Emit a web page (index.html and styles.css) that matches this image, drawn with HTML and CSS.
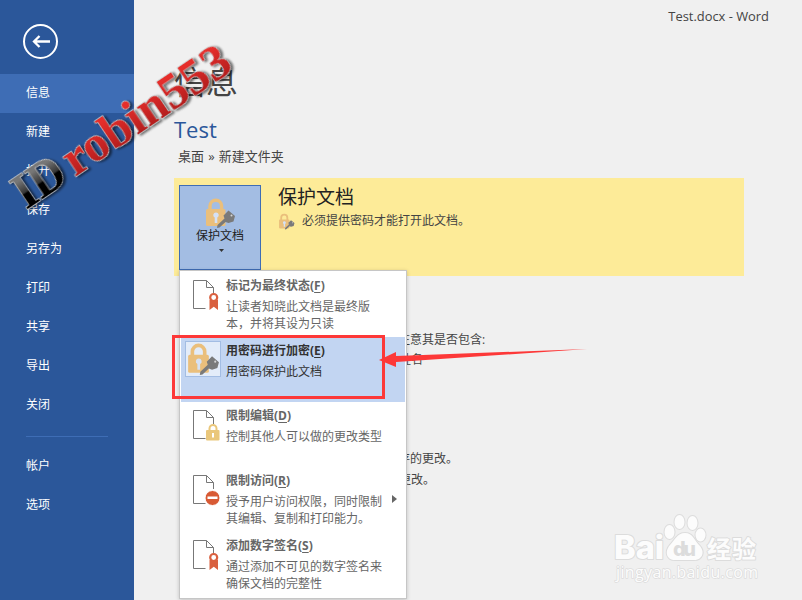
FILE: index.html
```html
<!DOCTYPE html>
<html lang="zh-CN">
<head>
    <meta charset="UTF-8">
    <meta name="viewport" content="width=device-width, initial-scale=1.0">
    <title>Test.docx - Word</title>
    <link rel="stylesheet" href="styles.css">
</head>
<body>
    <!-- Shared icons -->
    <svg class="sprite" width="0" height="0">
        <symbol id="lock-key" viewBox="0 0 32 32">
            <path d="M6 14V9a5.800 5.800 0 0 1 11.600 0V14" fill="none" stroke="#eabf7c" stroke-width="3.400"/>
            <rect x="2" y="12" width="19.500" height="17" rx="1.500" fill="#eabf7c"/>
            <path d="M12 15.500a2.700 2.700 0 0 1 1.300 5.100V26h-2.600v-5.400A2.700 2.700 0 0 1 12 15.500z" class="keyhole"/>
            <path d="M24.500 13.500l6.500 5.500-1.500 5.500-5 1.500-3-1-6 5.500-2.500.5.500-3 7-6.500-1-3z" fill="#7a7a7a"/>
            <circle cx="27.500" cy="18.500" r="1" fill="#d5d5d5"/>
        </symbol>
        <symbol id="page" viewBox="0 0 30 32">
            <path d="M13.500 28.500H1.500V.5h13l7 7V14M14.500.5v7h7" fill="none" stroke="#777"/>
        </symbol>
        <symbol id="ribbon" viewBox="0 0 30 32">
            <path d="M17.500 20h8.500v10l-4.200-3.200-4.300 3.200z" fill="#d9603f"/>
            <circle cx="21.700" cy="17.500" r="3.500" fill="#fff" stroke="#d9603f" stroke-width="2.200"/>
        </symbol>
    </svg>

    <div class="app">
        <nav class="sidebar">
            <button class="back" aria-label="返回">
                <svg width="36" height="36" viewBox="0 0 36 36" fill="none" stroke="#fff">
                    <circle cx="18.500" cy="18.500" r="16.500" stroke-width="2"/>
                    <path d="M28 18.500H12M17.500 13l-5.500 5.500 5.500 5.500" stroke-width="2.300"/>
                </svg>
            </button>
            <ul class="nav-list">
                <li class="active">信息</li>
                <li>新建</li>
                <li>打开</li>
                <li>保存</li>
                <li>另存为</li>
                <li>打印</li>
                <li>共享</li>
                <li>导出</li>
                <li>关闭</li>
            </ul>
            <hr class="divider">
            <ul class="nav-list">
                <li>帐户</li>
                <li>选项</li>
            </ul>
        </nav>

        <main class="content">
            <div class="window-title">Test.docx - Word</div>
            <h1>信息</h1>
            <h2>Test</h2>
            <p class="path">桌面 » 新建文件夹</p>

            <section class="protect">
                <div class="protect-anchor">
                    <button class="protect-btn">
                        <svg class="lock-icon" width="32" height="32"><use href="#lock-key"/></svg>
                        <span>保护文档</span>
                        <svg class="caret" width="5" height="3"><path d="M0 0h5L2.500 3z" fill="#333"/></svg>
                    </button>

                    <div class="menu">
                        <div class="menu-item">
                            <svg class="menu-icon" width="30" height="32"><use href="#page"/><use href="#ribbon"/></svg>
                            <div class="menu-text">
                                <h4>标记为最终状态(<u>F</u>)</h4>
                                <p>让读者知晓此文档是最终版<br>本，并将其设为只读</p>
                            </div>
                        </div>
                        <div class="menu-item selected">
                            <span class="icon-frame"><svg width="34" height="34"><use href="#lock-key"/></svg></span>
                            <div class="menu-text">
                                <h4>用密码进行加密(<u>E</u>)</h4>
                                <p>用密码保护此文档</p>
                            </div>
                        </div>
                        <div class="menu-item">
                            <svg class="menu-icon" width="30" height="32">
                                <use href="#page"/>
                                <path d="M17.500 21v-2.500a3.500 3.500 0 0 1 7 0V21" fill="none" stroke="#eac77b" stroke-width="2"/>
                                <rect x="14" y="20" width="13.500" height="10.500" rx="1" fill="#eac77b"/>
                                <path d="M21 23v4.500" stroke="#fff" stroke-width="2"/>
                            </svg>
                            <div class="menu-text">
                                <h4>限制编辑(<u>D</u>)</h4>
                                <p>控制其他人可以做的更改类型</p>
                            </div>
                        </div>
                        <div class="menu-item">
                            <svg class="menu-icon" width="30" height="32">
                                <use href="#page"/>
                                <circle cx="20.500" cy="23" r="7.500" fill="#d85a34" stroke="#fff"/>
                                <rect x="15.500" y="21.500" width="10" height="2.500" fill="#fff"/>
                            </svg>
                            <div class="menu-text">
                                <h4>限制访问(<u>R</u>)</h4>
                                <p>授予用户访问权限，同时限制<br>其编辑、复制和打印能力。</p>
                            </div>
                            <svg class="submenu" width="5" height="8"><path d="M0 0l5 4-5 4z" fill="#666"/></svg>
                        </div>
                        <div class="menu-item">
                            <svg class="menu-icon" width="30" height="32"><use href="#page"/><use href="#ribbon"/></svg>
                            <div class="menu-text">
                                <h4>添加数字签名(<u>S</u>)</h4>
                                <p>通过添加不可见的数字签名来<br>确保文档的完整性</p>
                            </div>
                        </div>
                    </div>
                </div>
                <div class="protect-info">
                    <h3>保护文档</h3>
                    <p><svg class="small-lock" width="17" height="17"><use href="#lock-key"/></svg>必须提供密码才能打开此文档。</p>
                </div>
            </section>

            <section class="details inspect">
                <p>在发布此文件之前，请注意其是否包含:</p>
                <p class="sub">文档属性和作者的姓名</p>
            </section>
            <section class="details versions">
                <p>签入、签出和恢复未保存的更改。</p>
                <p class="sub">没有任何未保存的更改。</p>
            </section>
        </main>

        <!-- Annotations over the window -->
        <svg class="overlay" width="802" height="600" viewBox="0 0 802 600">
            <defs>
                <linearGradient id="dark" x1="0" y1="0" x2="0" y2="1">
                    <stop offset="0.300" stop-color="#777"/>
                    <stop offset="0.540" stop-color="#333"/>
                    <stop offset="0.550" stop-color="#000"/>
                </linearGradient>
                <linearGradient id="red" x1="0" y1="0" x2="0" y2="1">
                    <stop offset="0.250" stop-color="#e62e2b"/>
                    <stop offset="0.850" stop-color="#b01c1c"/>
                </linearGradient>
            </defs>
            <rect x="173.500" y="336.500" width="210" height="61" fill="none" stroke="#fd3838" stroke-width="3"/>
            <path d="M379 360l17-8v4l191-7-191 13v5z" fill="#fd3838"/>
            <g class="signature" transform="translate(26 210) rotate(-34)">
                <text x="0" y="0" textLength="53" lengthAdjust="spacingAndGlyphs" fill="url(#dark)">ID</text>
                <text x="59" y="0" textLength="193" lengthAdjust="spacingAndGlyphs" fill="url(#red)">robin553</text>
            </g>
            <g class="baidu">
                <text class="logo" x="614" y="559" textLength="50" lengthAdjust="spacingAndGlyphs">Bai</text>
                <ellipse cx="669.500" cy="532" rx="5" ry="7"/>
                <ellipse cx="679.500" cy="522" rx="5" ry="7"/>
                <ellipse cx="692.500" cy="523" rx="5" ry="7"/>
                <ellipse cx="700.500" cy="535" rx="5" ry="6.500"/>
                <path d="M685 533c8 0 9 7 14 12 7 7 3 15-5 15-5 0-14 0-19 0-8 0-11-8-5-15 5-5 7-12 15-12z"/>
                <text class="du" x="673" y="556" textLength="23">du</text>
                <text class="cn" x="707" y="558" textLength="49">经验</text>
                <text class="url" x="616" y="578" textLength="142">jingyan.baidu.com</text>
            </g>
        </svg>
    </div>
</body>
</html>
```

FILE: styles.css
```css
/* General */
* {
    box-sizing: border-box;
}

body {
    margin: 0;
    font-family: "Open Sans", "Noto Sans CJK SC", sans-serif;
    font-size: 12px;
    color: #444;
    background: #f0f0f0;
}

h1, h2, h3, h4, p, ul {
    margin: 0;
    padding: 0;
    font-weight: normal;
}

button {
    font-family: inherit;
    font-size: 12px;
    padding: 0;
}

.sprite {
    position: absolute;
}

.keyhole {
    fill: #d5e1f5;
}

.app {
    position: relative;
    display: flex;
    width: 802px;
    height: 600px;
    overflow: hidden;
}

/* Sidebar */
.sidebar {
    width: 134px;
    background: #2b579a;
    color: #fff;
}

.back {
    display: block;
    height: 36px;
    margin: 23px 0 15px 22px;
    border: none;
    background: none;
}

.nav-list {
    list-style: none;
}

.nav-list li {
    height: 39px;
    line-height: 38px;
    padding-left: 26px;
}

.nav-list .active {
    background: #3e6db5;
}

.divider {
    width: 82px;
    height: 1px;
    margin: 11px 0 10px 26px;
    border: none;
    background: #3e6db5;
}

/* Main content */
.content {
    flex: 1;
    padding-left: 40px;
}

.window-title {
    height: 56px;
    padding: 7px 33px 0 0;
    line-height: 18px;
    text-align: right;
    font-size: 12.9px;
}

h1 {
    height: 56px;
    line-height: 52px;
    font-size: 32px;
}

h2 {
    height: 36px;
    line-height: 34px;
    font-size: 22px;
    color: #2b579a;
}

.path {
    height: 30px;
    padding-left: 4px;
    line-height: 17px;
    font-size: 13px;
    word-spacing: 0.8px;
}

/* Protect document */
.protect {
    display: flex;
    width: 570px;
    height: 98px;
    padding: 7px 5px;
    background: #fdeb98;
}

.protect-anchor {
    position: relative;
}

.protect-btn {
    display: flex;
    flex-direction: column;
    align-items: center;
    width: 82px;
    height: 85px;
    padding-top: 11px;
    border: 1px solid #3e6db5;
    background: #a3bde3;
    color: #222;
    line-height: 18px;
}

.protect-btn span {
    margin-top: -2px;
}

.caret {
    margin: 4px 0 0 3px;
}

.protect-info {
    padding-left: 17px;
}

.protect-info h3 {
    height: 26px;
    line-height: 24px;
    font-size: 19px;
    color: #222;
}

.protect-info p {
    display: flex;
    line-height: 20px;
}

.small-lock {
    margin: 2px 7px 0 0;
}

/* Dropdown menu */
.menu {
    position: absolute;
    top: 85px;
    left: 0;
    width: 228px;
    height: 329px;
    padding: 1px;
    border: 1px solid #c6c6c6;
    background: #fff;
    box-shadow: 0 1px 4px rgba(0, 0, 0, 0.2);
    color: #666;
}

.menu-item {
    display: flex;
    height: 65px;
}

.menu-icon {
    width: 30px;
    margin: 8px 4px 0 11px;
}

.menu-text {
    padding-top: 5px;
    white-space: nowrap;
}

.menu-text h4 {
    height: 21px;
    line-height: 18px;
    font-weight: bold;
}

.menu-text u {
    text-underline-offset: 2px;
}

.menu-text p {
    line-height: 17px;
}

.selected {
    background: #c2d5f2;
    color: #333;
}

.icon-frame {
    width: 36px;
    height: 36px;
    margin: 4px 5px 0 4px;
    border: 1px solid #a3bde3;
    background: #e3ecf9;
}

.submenu {
    margin: 28px 0 0 10px;
}

/* Sections under the menu */
.details {
    padding-left: 104px;
    line-height: 20px;
}

.details .sub {
    padding-left: 25px;
}

.inspect {
    padding-top: 54px;
}

.versions {
    padding-top: 79px;
}

.versions .sub {
    padding-top: 1px;
}

/* Annotations */
.overlay {
    position: absolute;
    top: 0;
    left: 0;
    pointer-events: none;
}

.signature {
    font-family: "Liberation Serif", serif;
    font-size: 51px;
    font-weight: bold;
    stroke: #ccc;
    stroke-width: 1.4px;
    paint-order: stroke;
    filter: drop-shadow(2px 2px 1px rgba(0, 0, 0, 0.55));
}

.baidu {
    fill: #fcfcfc;
    stroke: #dcdcdc;
    stroke-width: 2px;
    stroke-linejoin: round;
    paint-order: stroke;
}

.logo, .du {
    font-family: Inter, sans-serif;
    font-weight: 800;
}

.logo {
    font-size: 32px;
}

.du {
    font-size: 20px;
    fill: #dcdcdc;
    stroke: none;
}

.cn {
    font-family: "Noto Sans CJK SC", sans-serif;
    font-size: 24px;
    font-weight: bold;
}

.url {
    font-size: 16px;
    stroke-width: 1.5px;
}
```
